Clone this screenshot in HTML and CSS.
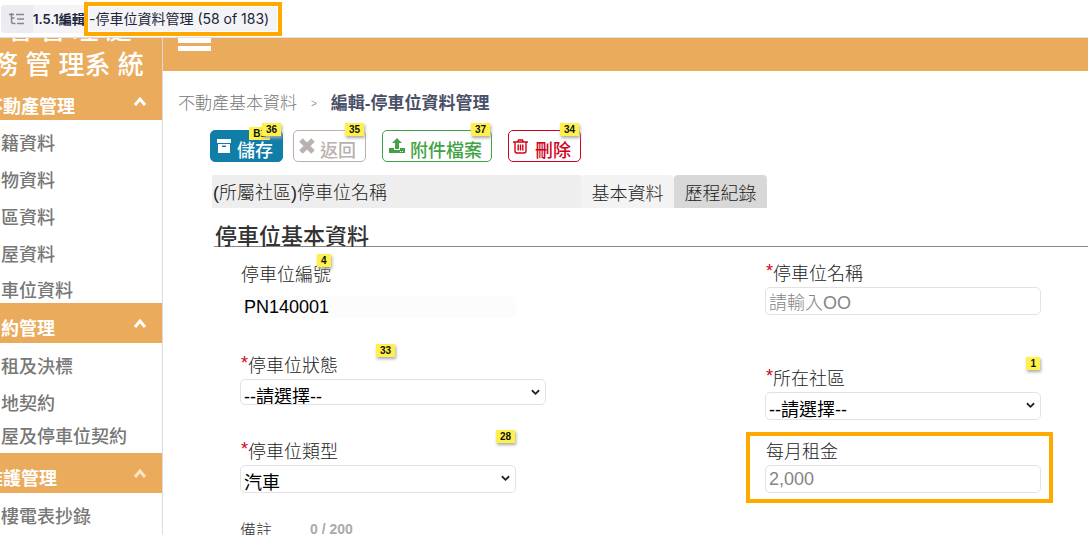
FILE: index.html
```html
<!DOCTYPE html>
<html lang="zh-Hant">
<head>
<meta charset="utf-8">
<title>停車位資料管理</title>
<link rel="stylesheet" href="styles.css">
</head>
<body>
<header class="topbar">
  <div class="crumb">
    <button class="tree" aria-label="目錄"><svg width="16" height="12" viewBox="0 0 16 12" fill="none" stroke="#858592" stroke-width="1.5"><path d="M2.500 0v8.500q0 2 2 2h2M2.500 5h3M0 1.500h5M7 1.500h8M8 6h7M8 10.500h7"/></svg></button>
    <span class="crumb-title"><b>1.5.1編輯</b></span>
  </div>
  <div class="page-mark">-停車位資料管理 (58 of 183)</div>
</header>
<div class="layout">
  <aside class="sidebar">
    <div class="brand"><div class="brand-line first">署 管 理 處</div><div class="brand-line">務 管 理系 統</div></div>
    <nav>
      <button class="group top"><span class="shift">不動產管理</span><svg class="chev" viewBox="0 0 14 12"><path d="M2 10l5-6 5 6"/></svg></button>
      <ul class="menu"><li><a href="#">籍資料</a></li><li><a href="#">物資料</a></li><li><a href="#">區資料</a></li><li><a href="#">屋資料</a></li><li><a href="#">車位資料</a></li></ul>
      <button class="group"><span>約管理</span><svg class="chev" viewBox="0 0 14 12"><path d="M2 10l5-6 5 6"/></svg></button>
      <ul class="menu"><li><a href="#">租及決標</a></li><li><a href="#">地契約</a></li><li class="tight"><a href="#">屋及停車位契約</a></li></ul>
      <button class="group"><span class="shift">維護管理</span><svg class="chev pale" viewBox="0 0 14 12"><path d="M2 10l5-6 5 6"/></svg></button>
      <ul class="menu"><li><a href="#">樓電表抄錄</a></li></ul>
    </nav>
  </aside>
  <main class="content">
    <div class="band"><button class="burger" aria-label="選單"><i></i><i></i></button></div>
    <div class="page">
      <div class="trail"><a href="#">不動產基本資料</a><span class="sep">&gt;</span><b>編輯-停車位資料管理</b></div>
      <div class="actions">
        <button class="btn save"><svg width="14" height="14" viewBox="0 0 14 14" fill="#fff"><path d="M0 0h14v4H0zM1 5h12v9H1zM5 6.500v1.500h4V6.500z" fill-rule="evenodd"/></svg>儲存<span class="tag under">B1</span><span class="tag">36</span></button>
        <button class="btn back"><svg width="16" height="16" viewBox="0 0 16 16" stroke="#b9b1ae" stroke-width="5"><path d="M2 2l12 12M14 2L2 14"/></svg>返回<span class="tag">35</span></button>
        <button class="btn attach"><svg width="16" height="16" viewBox="0 0 16 16" fill="#41a345"><path d="M8 0l5 5H10v6H6V5H3zM0 10h5v2h6v-2h5v5H0zM11 13v1h1v-1zM13 13v1h1v-1z" fill-rule="evenodd"/></svg>附件檔案<span class="tag">37</span></button>
        <button class="btn delete"><svg width="15" height="15" viewBox="0 0 15 15" fill="none" stroke="#d0021b" stroke-width="1.400"><path d="M0 3h15M4.500 3l1-2h4l1 2M2 3v9q0 2 2 2h7q2 0 2-2V3M5.200 5.500v6M7.500 5.500v6M9.800 5.500v6"/></svg>刪除<span class="tag">34</span></button>
      </div>
      <div class="tabs"><div class="tab-title">(所屬社區)停車位名稱</div><button class="tab">基本資料</button><button class="tab active">歷程紀錄</button></div>
      <h2>停車位基本資料</h2>
      <form class="form">
        <div class="col">
          <div class="field number"><label for="no">停車位編號</label><span class="tag n4">4</span><input id="no" value="PN140001" readonly></div>
          <div class="field state"><label for="state"><sup>*</sup>停車位狀態</label><span class="tag n33">33</span><div class="select"><select id="state"><option>--請選擇--</option></select><svg viewBox="0 0 10 7"><path d="M1 1l4 4 4-4"/></svg></div></div>
          <div class="field kind"><label for="kind"><sup>*</sup>停車位類型</label><span class="tag n28">28</span><div class="select"><select id="kind"><option>汽車</option></select><svg viewBox="0 0 10 7"><path d="M1 1l4 4 4-4"/></svg></div></div>
          <div class="note"><span>備註</span><b>0 / 200</b></div>
        </div>
        <div class="col right">
          <div class="field name"><label for="name"><sup>*</sup>停車位名稱</label><input id="name" placeholder="請輸入OO"></div>
          <div class="field area"><label for="area"><sup>*</sup>所在社區</label><span class="tag n1">1</span><div class="select"><select id="area"><option>--請選擇--</option></select><svg viewBox="0 0 10 7"><path d="M1 1l4 4 4-4"/></svg></div></div>
          <div class="field rent"><label for="rent">每月租金</label><input id="rent" placeholder="2,000"></div>
        </div>
      </form>
    </div>
  </main>
</div>
</body>
</html>
```

FILE: styles.css
```css
* { box-sizing: border-box; }
body { margin: 0; height: 100vh; overflow: hidden; display: flex; flex-direction: column; background: #fff; color: #333; font: 18px/26px "Liberation Sans", "Noto Sans CJK TC", sans-serif; }
button, input, select { font: inherit; color: inherit; margin: 0; padding: 0; border: 0; background: none; }
a { color: inherit; text-decoration: none; }
.topbar { height: 38px; flex: none; display: flex; align-items: center; border-bottom: 1px solid #e0e0e4; font: 14px/20px Inter, "Noto Sans CJK TC", sans-serif; color: #20243a; padding-left: 1px; }
.crumb { display: flex; align-items: center; height: 28px; width: 83px; border-radius: 4px 0 0 4px; background: #f4f4f7; white-space: nowrap; }
.tree { width: 32px; height: 28px; flex: none; background: #ececf0; border-radius: 4px 0 0 4px; display: flex; align-items: center; justify-content: center; }
.crumb-title { font-size: 13px; }
.crumb-title b { font-weight: 600; }
.page-mark { height: 34px; border: 4px solid #ffa800; padding: 3px 9px 3px 1px; background: #f4f4f7; box-shadow: inset 0 0 0 1px #fff; white-space: nowrap; }
.layout { flex: 1; min-height: 0; display: flex; }
.sidebar { width: 163px; flex: none; border-right: 1px solid #dcdcdc; overflow: hidden; color: #777; font-weight: 500; }
.brand { background: #eaab5d; color: #fff; font-size: 26px; line-height: 32px; height: 47px; padding-bottom: 4px; display: flex; flex-direction: column; justify-content: flex-end; overflow: hidden; white-space: nowrap; }
.brand-line { margin-left: -8px; flex: none; }
.brand-line.first { margin: 0 0 3px 6px; }
.group { width: 100%; height: 40px; background: #eaab5d; color: #fff; font-weight: 700; display: flex; align-items: center; padding: 12px 15px 0 1px; }
.group.top { height: 35px; padding-top: 8px; }
.shift { margin-left: -16px; }
.chev { width: 14px; height: 12px; margin: 0 0 12px auto; fill: none; stroke: #fff; stroke-width: 3; }
.pale { stroke: #f9e6c4; }
.menu { list-style: none; margin: 0; padding: 7px 0 0 1px; display: grid; }
.menu li { height: 37px; padding-top: 4px; white-space: nowrap; }
.menu li:nth-child(4) { height: 36px; }
.menu li:nth-child(5) { height: 29px; }
.menu li.tight { height: 29px; padding-top: 0; }
.content { flex: 1; min-width: 0; }
.band { height: 33px; background: #eaab5d; padding-left: 15px; }
.burger { display: grid; gap: 3px; }
.burger i { width: 33px; height: 5px; background: #fff; }
.page { padding: 20px 0 0 15px; }
.trail { display: flex; align-items: center; font-size: 17px; color: #777; font-weight: 300; }
.trail b { color: #4a5068; font-weight: 600; }
.sep { font-size: 10px; margin: 0 14px; color: #999; }
.actions { display: flex; margin: 13px 0 0 32px; }
.btn { position: relative; height: 32px; border: 1px solid; border-radius: 5px; display: flex; align-items: center; gap: 5px; padding: 9px 9px 0 6px; font-weight: 500; white-space: nowrap; }
.btn svg { flex: none; margin-bottom: 9px; }
.save { background: #117ea8; color: #fff; border-color: #117ea8; gap: 6px; }
.back { color: #b9b1ae; margin-left: 10px; padding-left: 5px; }
.attach { color: #41a345; margin-left: 16px; }
.delete { color: #d0021b; margin-left: 16px; padding-left: 4px; gap: 7px; }
.tag { position: absolute; right: 1px; top: -8px; height: 13px; padding: 0 4px; background: #fff14a; color: #111; font: 700 10px/13px "Liberation Sans", sans-serif; box-shadow: 1px 2px 3px #aaa; }
.tag.under { right: 12px; top: -4px; box-shadow: none; }
.tabs { display: flex; margin: 13px 0 0 34px; height: 33px; font-weight: 300; color: #222; }
.tab-title { width: 369px; background: #eee; padding: 5px 0 0 1px; }
.tab { width: 93px; background: #f3f3f3; border-radius: 4px 4px 0 0; padding-top: 4px; }
.tab.active { background: #d8d8d8; }
h2 { margin: 13px 0 0 36px; padding-left: 1px; height: 26px; border-bottom: 1px solid #888; font-size: 22px; line-height: 32px; font-weight: 500; }
.form { display: flex; margin-left: 62px; }
.col { width: 525px; flex: none; }
.col.right { width: 276px; }
.field { position: relative; width: 276px; }
.field label { display: block; height: 26px; padding-left: 1px; line-height: 26px; white-space: nowrap; font-weight: 300; color: #222; }
.field sup { color: #d0021b; font-size: 18px; line-height: 16px; vertical-align: 3px; font-weight: 400; }
.field input { display: block; width: 100%; height: 28px; border: 1px solid #e2e2e2; border-radius: 5px; padding: 0 3px; }
.field input::placeholder { color: #858585; opacity: 1; }
.name input { padding-top: 4px; font-weight: 300; }
.number { padding-top: 15px; }
.number input { height: 22px; margin-top: 8px; border: 0; background: #fcfcfc; color: #000; padding-left: 4px; }
.state { width: 306px; padding-top: 35px; }
.kind { padding-top: 34px; }
.select { position: relative; height: 28px; }
.state .select { height: 26px; }
select { appearance: none; width: 100%; height: 100%; border: 1px solid #e2e2e2; border-radius: 5px; padding: 4px 3px 0; color: #000; background: #fff; }
.select svg { position: absolute; right: 6px; top: 10px; width: 9px; height: 7px; fill: none; stroke: #222; stroke-width: 2; }
.n4 { right: auto; left: 77px; top: 7px; }
.n33 { right: auto; left: 136px; top: 26px; }
.n28 { right: 1px; top: 25px; }
.n1 { top: 42px; }
.note { display: flex; gap: 38px; padding-top: 24px; font-size: 16px; line-height: 28px; font-weight: 300; }
.note b { color: #aaa; font-size: 14px; line-height: 24px; font-weight: 700; }
.name { padding-top: 14px; }
.area { padding-top: 51px; }
.rent { margin: 12px 0 0 -19px; width: 307px; border: 4px solid #ffa800; padding: 3px 8px 6px 15px; }
```
